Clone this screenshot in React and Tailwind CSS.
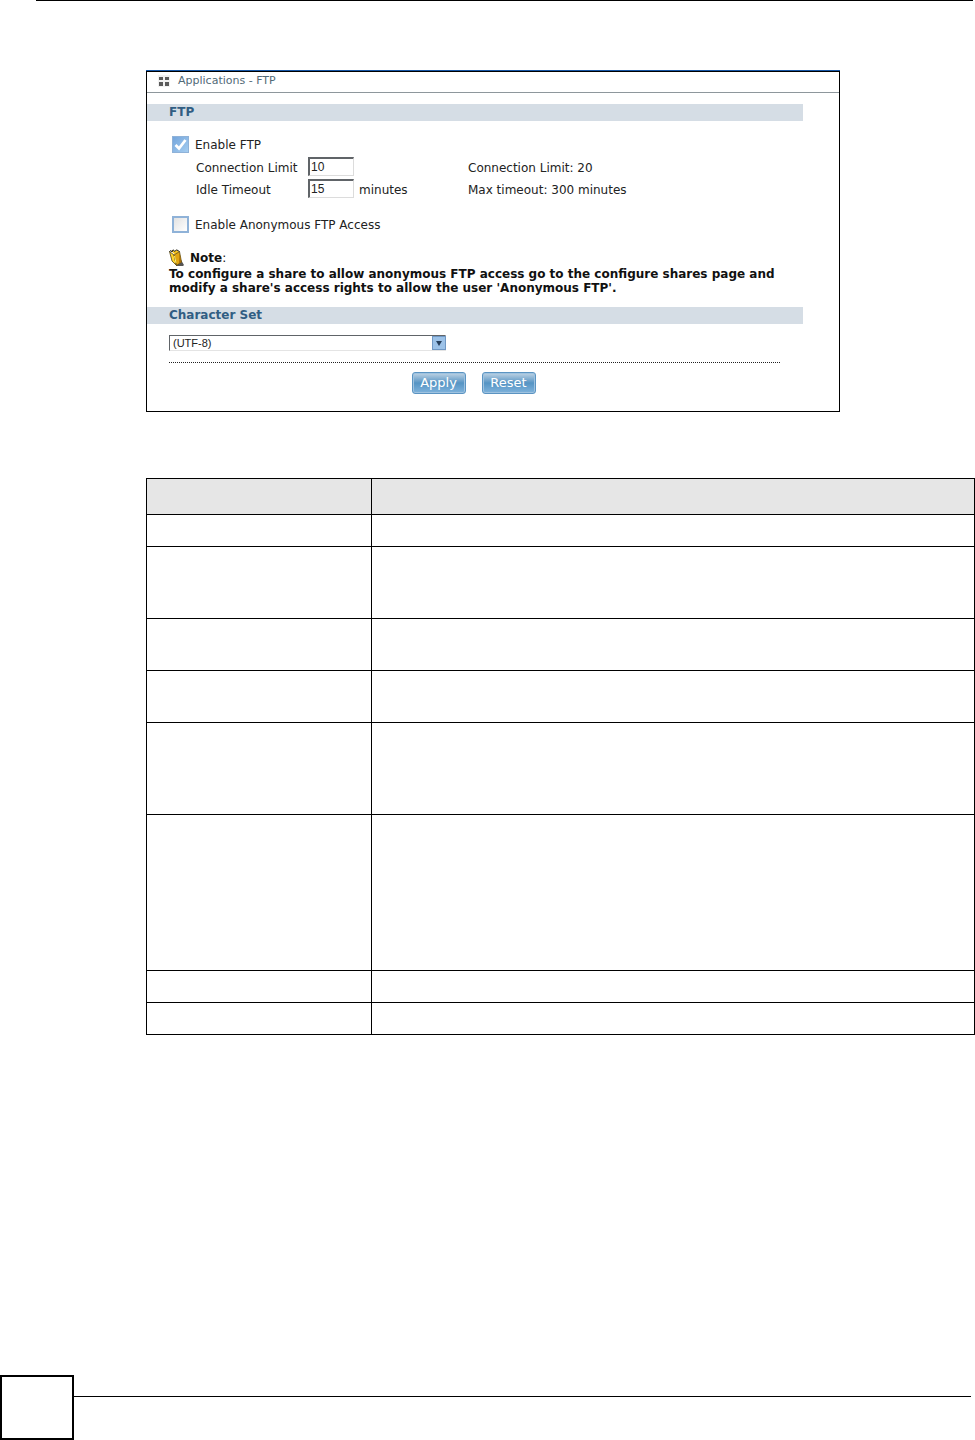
import React, { useState } from "react";

const rowHeights = ["h-8", "h-[72px]", "h-[52px]", "h-[52px]", "h-[92px]", "h-[156px]", "h-8", "h-8"];

function GridIcon() {
  return (
    <svg className="h-3 w-3 shrink-0" viewBox="0 0 12 12" aria-hidden="true">
      <rect width="12" height="12" fill="#f1f1f1" />
      <g fill="#5a5a5a">
        <rect x="1" y="2" width="4" height="3" />
        <rect x="7" y="2" width="4" height="3" />
        <rect x="1" y="7" width="4" height="4" />
        <rect x="7" y="7" width="4" height="4" />
      </g>
    </svg>
  );
}

function NoteIcon() {
  return (
    <svg className="h-[18px] w-4 shrink-0" viewBox="0 0 16 18" aria-hidden="true">
      <path d="M12 11 L15 16 L14 17 L7 17 Z" fill="#555" />
      <path d="M0.5 2.5 L5 6 L7.5 16.5 L3 12 Z" fill="#ffd42e" stroke="#3a2d05" strokeWidth="0.7" />
      <path d="M2 2 L6 5.5 L10 2.5 L6.5 0.8 L5.5 2.5 L3.5 1 Z" fill="#f7c51e" />
      <path d="M5 6 L10.5 2.5 L12.5 13 L7.5 16.5 Z" fill="#e0a512" stroke="#4a3905" strokeWidth="0.7" />
      <path d="M10.5 4 L12.5 13 L10 15 Z" fill="#a86f0a" />
      <path d="M0.5 2.5 L2 1.5 L3 3 L4 0.8 L6 2.5 L7.5 0.8 L10.5 2.5" fill="none" stroke="#222" strokeWidth="1" />
      <path d="M5.5 7 L7 14" stroke="#fff07a" strokeWidth="1" />
    </svg>
  );
}

function CheckBox({ id, checked, onChange, children }) {
  return (
    <div className="flex items-center gap-[6px] pl-[3px]">
      <span className="relative h-[17px] w-[17px]">
        <input
          id={id}
          type="checkbox"
          checked={checked}
          onChange={onChange}
          className="block h-[17px] w-[17px] appearance-none border-2 border-[#8fb2d8] bg-linear-to-br from-[#e2e2e2] to-white checked:border checked:from-[#74a5dc] checked:to-[#a5cdf0]"
        />
        {checked && (
          <svg className="pointer-events-none absolute inset-0 h-[17px] w-[17px]" viewBox="0 0 17 17" aria-hidden="true">
            <path d="M3.5 9 L7 12.5 L13.5 4" fill="none" stroke="#fff" strokeWidth="2.8" />
          </svg>
        )}
      </span>
      <label htmlFor={id}>{children}</label>
    </div>
  );
}

function NumberRow({ id, label, value, unit, hint }) {
  return (
    <div className="flex h-[22px] items-start pl-[27px] leading-[22px]">
      <label htmlFor={id} className="w-[112px]">{label}</label>
      <input
        id={id}
        type="text"
        defaultValue={value}
        className="h-[19px] w-[46px] border border-t-2 border-l-2 border-[#dcdcdc] border-t-[#606468] border-l-[#606468] bg-white px-px font-['Liberation_Sans',Arial,sans-serif] text-xs leading-4 text-[#222]"
      />
      <span className="w-[114px] pl-[5px]">{unit}</span>
      <span>{hint}</span>
    </div>
  );
}

function SectionTitle({ children }) {
  return (
    <h2 className="mr-9 bg-[#d5dde5] pl-[22px] text-xs leading-[17px] font-bold text-[#315d83]">{children}</h2>
  );
}

function ActionButton({ type, children }) {
  return (
    <button
      type={type}
      className="h-[22px] w-[54px] rounded-[3px] border border-[#5b94c2] bg-linear-to-b from-[#bfd3e3] via-[#5594c4] to-[#7fb3dc] text-center font-['DejaVu_Sans',Verdana,sans-serif] text-[13px] leading-5 text-white inset-ring inset-ring-[#9fc3e0]"
    >
      {children}
    </button>
  );
}

function FtpPanel() {
  const [ftp, setFtp] = useState(true);
  const [anonymous, setAnonymous] = useState(false);
  return (
    <section className="w-full max-w-[694px] border-t border-[#1656a5]">
      <form
        onSubmit={(e) => e.preventDefault()}
        className="border border-black bg-white pb-[17px] text-xs leading-[14px] text-[#222]"
      >
        <header className="flex h-[21px] items-center gap-2 border-b border-[#8e979c] pb-[3px] pl-[11px]">
          <GridIcon />
          <h1 className="text-[11px] text-[#526a77]">Applications - FTP</h1>
        </header>
        <div className="pt-[11px]">
          <SectionTitle>FTP</SectionTitle>
          <div className="flex flex-col pt-[15px] pl-[22px]">
            <CheckBox id="ftp" checked={ftp} onChange={(e) => setFtp(e.target.checked)}>
              Enable FTP
            </CheckBox>
            <div className="pt-1 pb-[2px]">
              <NumberRow id="limit" label="Connection Limit" value="10" unit="" hint="Connection Limit: 20" />
              <NumberRow id="idle" label="Idle Timeout" value="15" unit="minutes" hint="Max timeout: 300 minutes" />
            </div>
            <div className="pt-[13px]">
              <CheckBox id="anonymous" checked={anonymous} onChange={(e) => setAnonymous(e.target.checked)}>
                Enable Anonymous FTP Access
              </CheckBox>
            </div>
            <div className="pt-4 pr-[50px] pb-3 font-bold text-[#111]">
              <p className="flex h-[18px] items-center gap-[5px]">
                <NoteIcon />
                <span>Note<span className="font-normal">:</span></span>
              </p>
              <p>
                To configure a share to allow anonymous FTP access go to the configure shares page and
                modify a share's access rights to allow the user 'Anonymous FTP'.
              </p>
            </div>
          </div>
          <SectionTitle>Character Set</SectionTitle>
          <div className="pt-[11px] pr-[59px] pl-[22px]">
            <div className="relative w-[277px]">
              <select
                aria-label="Character Set"
                className="block h-4 w-full appearance-none border border-[#e4e4e4] border-t-[#606468] border-l-[#606468] bg-white pl-[3px] font-['Liberation_Sans',Arial,sans-serif] text-[11px] leading-[14px] text-[#222]"
              >
                <option>(UTF-8)</option>
              </select>
              <svg className="pointer-events-none absolute top-px right-0 h-[14px] w-[14px]" viewBox="0 0 14 14" aria-hidden="true">
                <rect x="0.5" y="0.5" width="13" height="13" fill="#9cc2e8" stroke="#7098c4" />
                <path d="M4 5 H10 L7 10 Z" fill="#263f5c" />
              </svg>
            </div>
            <hr className="mt-[11px] border-t border-dotted border-[#222]" />
          </div>
          <div className="flex justify-center gap-4 pt-[9px] pr-[39px]">
            <ActionButton type="submit">Apply</ActionButton>
            <ActionButton type="reset">Reset</ActionButton>
          </div>
        </div>
      </form>
    </section>
  );
}

export default function App() {
  return (
    <div className="flex min-h-screen flex-col bg-white font-['DejaVu_Sans',Verdana,sans-serif]">
      <hr className="mr-[2px] ml-9 border-t border-black" />
      <main className="pt-[69px] pb-10 pl-[146px]">
        <FtpPanel />
        <table className="mt-[66px] w-full table-fixed border-collapse border border-black">
          <colgroup>
            <col className="w-[225px]" />
            <col />
          </colgroup>
          <thead>
            <tr className="h-9 bg-[#e6e6e6]">
              <th className="border border-black" />
              <th className="border border-black" />
            </tr>
          </thead>
          <tbody>
            {rowHeights.map((height, i) => (
              <tr key={i} className={height}>
                <td className="border border-black" />
                <td className="border border-black" />
              </tr>
            ))}
          </tbody>
        </table>
      </main>
      <footer className="mt-auto flex items-start pr-1">
        <div className="h-[65px] w-[74px] shrink-0 border-2 border-black" />
        <hr className="mt-[21px] grow border-t border-black" />
      </footer>
    </div>
  );
}
